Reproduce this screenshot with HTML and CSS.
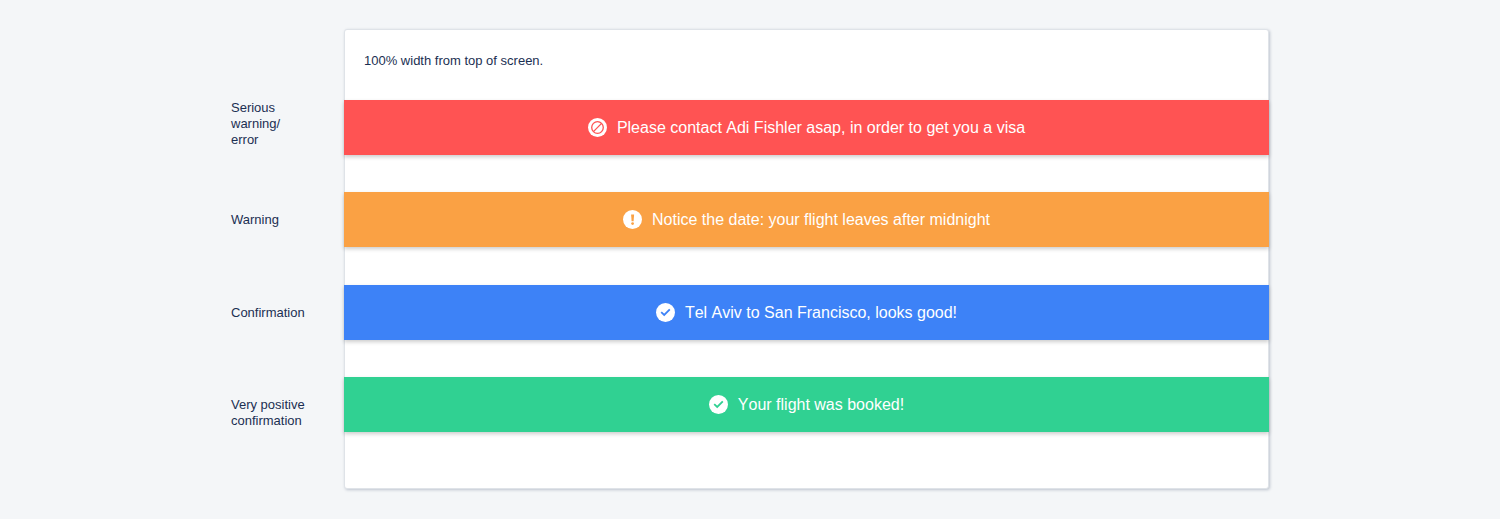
FILE: index.html
```html
<!DOCTYPE html>
<html lang="en">
<head>
    <meta charset="UTF-8">
    <meta name="viewport" content="width=device-width, initial-scale=1.0">
    <title>Notification banners</title>
    <link rel="stylesheet" href="styles.css">
</head>
<body>
    <div class="container">
        <div class="labels stack">
            <div class="label label-long">Serious warning/<br>error</div>
            <div class="label">Warning</div>
            <div class="label">Confirmation</div>
            <div class="label">Very positive confirmation</div>
        </div>

        <div class="screen">
            <p class="note">100% width from top of screen.</p>
            <div class="stack">
                <div class="banner error">
                    <svg class="icon" viewBox="0 0 19 19" aria-hidden="true">
                        <circle cx="9.5" cy="9.5" r="9.5" fill="#fff"/>
                        <circle cx="9.5" cy="9.5" r="5.8" fill="none" stroke="currentColor" stroke-width="1.3"/>
                        <path d="M5.4 13.6L13.6 5.4" fill="none" stroke="currentColor" stroke-width="1.3"/>
                    </svg>
                    <span>Please contact Adi Fishler asap, in order to get you a visa</span>
                </div>
                <div class="banner warning">
                    <svg class="icon" viewBox="0 0 19 19" aria-hidden="true">
                        <circle cx="9.5" cy="9.5" r="9.5" fill="#fff"/>
                        <path d="M8.1 4.5h3l-.5 6.7H8.6z" fill="currentColor"/>
                        <circle cx="9.6" cy="13.6" r="1.4" fill="currentColor"/>
                    </svg>
                    <span>Notice the date: your flight leaves after midnight</span>
                </div>
                <div class="banner info">
                    <svg class="icon" viewBox="0 0 19 19" aria-hidden="true">
                        <circle cx="9.5" cy="9.5" r="9.5" fill="#fff"/>
                        <path d="M5.2 9.2L8.2 12L13.8 6.4" fill="none" stroke="currentColor" stroke-width="1.8"/>
                    </svg>
                    <span>Tel Aviv to San Francisco, looks good!</span>
                </div>
                <div class="banner success">
                    <svg class="icon" viewBox="0 0 19 19" aria-hidden="true">
                        <circle cx="9.5" cy="9.5" r="9.5" fill="#fff"/>
                        <path d="M5.2 9.2L8.2 12L13.8 6.4" fill="none" stroke="currentColor" stroke-width="1.8"/>
                    </svg>
                    <span>Your flight was booked!</span>
                </div>
            </div>
        </div>
    </div>
</body>
</html>
```

FILE: styles.css
```css
body {
    margin: 0;
    padding: 29px 20px;
    background-color: #f4f6f8;
    font-family: "Liberation Sans", Arial, sans-serif;
    font-size: 13px;
    line-height: 16px;
    color: #1b2f52;
}
.container {
    display: flex;
    max-width: 1038px;
    margin: 0 auto;
}
.stack {
    display: flex;
    flex-direction: column;
    justify-content: space-between;
    min-height: 332px;
}
.labels {
    flex: 0 0 113px;
    align-self: flex-start;
    padding-top: 71px;
}
.label {
    box-sizing: border-box;
    height: 55px;
    padding: 20px 32px 0 0;
}
.label-long {
    padding-top: 0;
}
.screen {
    flex: 1;
    padding-bottom: 56px;
    background-color: #fff;
    border: 1px solid #dfe3e8;
    border-radius: 3px;
    box-shadow: 1px 1px 3px rgba(27, 47, 82, 0.25);
}
.note {
    margin: 0;
    padding: 23px 19px 31px;
}
.banner {
    display: flex;
    align-items: center;
    justify-content: center;
    gap: 10px;
    height: 55px;
    margin: 0 -1px;
    font-size: 16px;
    font-kerning: none;
    line-height: 21px;
    box-shadow: 0 2px 4px rgba(0, 0, 0, 0.2);
}
.banner span {
    color: #fff;
}
.icon {
    flex: none;
    width: 19px;
    height: 19px;
}
/* the icon strokes reuse the banner colour */
.error {
    background-color: #ff5353;
    color: #ff5353;
}
.warning {
    background-color: #faa144;
    color: #faa144;
}
.info {
    background-color: #3d82f7;
    color: #3d82f7;
}
.success {
    background-color: #30d192;
    color: #30d192;
}
```
